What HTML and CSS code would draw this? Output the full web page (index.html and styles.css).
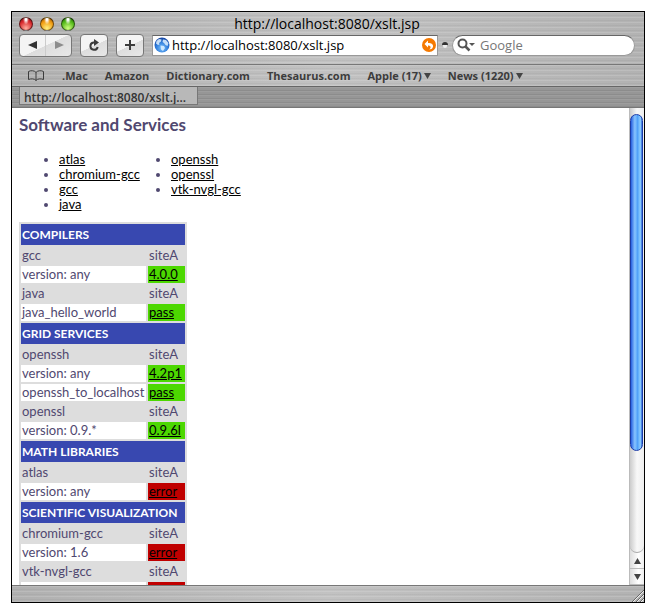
FILE: index.html
```html
<!DOCTYPE html>
<html lang="en">
<head>
<meta charset="utf-8">
<title>http://localhost:8080/xslt.jsp</title>
<link rel="stylesheet" href="styles.css">
</head>
<body>
<div class="window">
  <header class="chrome">
    <div class="titlebar">
      <div class="lights">
        <button class="light red" aria-label="Close"></button>
        <button class="light amber" aria-label="Minimise"></button>
        <button class="light green" aria-label="Zoom"></button>
      </div>
      <div class="title">http://localhost:8080/xslt.jsp</div>
    </div>
    <div class="toolbar">
      <div class="pair">
        <button class="half" aria-label="Back"><svg width="10" height="10" viewBox="0 0 10 10"><path d="M0 5 9 1v8z" fill="#333"/></svg></button>
        <button class="half" aria-label="Forward"><svg width="10" height="10" viewBox="0 0 10 10"><path d="M10 5 1 1v8z" fill="#8c8c8c"/></svg></button>
      </div>
      <button class="tool" aria-label="Reload"><svg width="12" height="13" viewBox="0 0 12 13"><path d="M7 3.500H5.500A3.700 3.700 0 1 0 9.700 8" fill="none" stroke="#3c3c3c" stroke-width="2"/><path d="M6 0 11 3.500 6 7z" fill="#3c3c3c"/></svg></button>
      <button class="tool" aria-label="Add bookmark"><svg width="12" height="12" viewBox="0 0 12 12"><path d="M6 1v10M1 6h10" stroke="#3c3c3c" stroke-width="2"/></svg></button>
      <div class="address">
        <svg width="16" height="16" viewBox="0 0 16 16"><defs><radialGradient id="sea" cx=".5" cy=".7" r=".7"><stop offset="0" stop-color="#7cc4ff"/><stop offset=".6" stop-color="#2c78d8"/><stop offset="1" stop-color="#123f9c"/></radialGradient></defs><circle cx="8" cy="8" r="7.500" fill="url(#sea)"/><path d="M2.500 4 5 2l2.500.500L7 4.500 5 6l.500 1.500L4 8 2 6.500zM9 2.500l3 .500 2.500 3-1 3-2-1L10 6 8.500 5zM6.500 8.500 10 9l1 2-2 3-2-1.500z" fill="#e2f2ff" opacity=".85"/></svg>
        <input class="url" type="text" value="http://localhost:8080/xslt.jsp" aria-label="Address">
        <button class="snap" aria-label="SnapBack"><svg width="14" height="14" viewBox="0 0 14 14"><circle cx="7" cy="7" r="7" fill="#f57900"/><path d="M2.500 6 6 2.500V5c3.500 0 5.500 1.500 5 3.800S8.500 11.500 7 11.500C9.500 10 9 7.500 6 7.500V9.500z" fill="#fff"/></svg></button>
      </div>
      <svg class="grip" width="6" height="6" viewBox="0 0 6 6"><path d="M0 3a3 3 0 0 1 6 0z" fill="#333"/><path d="M1 3h4v1a2 2 0 0 1-4 0z" fill="#eee"/></svg>
      <label class="search">
        <svg width="18" height="14" viewBox="0 0 18 14"><circle cx="5.500" cy="5.500" r="4" fill="none" stroke="#555" stroke-width="2"/><path d="m8.500 8.500 4 4" stroke="#555" stroke-width="2.500"/><path d="M12 5h6l-3 3z" fill="#555"/></svg>
        <input type="text" placeholder="Google" aria-label="Search Google">
      </label>
    </div>
  </header>
  <nav class="bookmarks">
    <button class="book" aria-label="Show all bookmarks"><svg width="18" height="12" viewBox="0 0 18 12"><path d="M9 2.500C7.500 .300 3.500 .300 1.500 1.500v8C4 8.500 7.500 8.500 9 10.500c1.500-2 5-2 7.500-1V1.500C14.500 .300 10.500 .300 9 2.500zv8" fill="none" stroke="#3c3c3c"/></svg></button>
    <a href="#">.Mac</a>
    <a href="#">Amazon</a>
    <a href="#">Dictionary.com</a>
    <a href="#">Thesaurus.com</a>
    <button class="folder">Apple (17)<svg width="7" height="6" viewBox="0 0 7 6"><path d="M0 0h7L3.500 6z" fill="#444"/></svg></button>
    <button class="folder">News (1220)<svg width="7" height="6" viewBox="0 0 7 6"><path d="M0 0h7L3.500 6z" fill="#444"/></svg></button>
  </nav>
  <div class="tabs"><a class="tab" href="#">http://localhost:8080/xslt.j...</a></div>
  <div class="viewport">
    <main>
      <h1>Software and Services</h1>
      <div class="index">
        <ul>
          <li><a href="#atlas">atlas</a></li>
          <li><a href="#chromium-gcc">chromium-gcc</a></li>
          <li><a href="#gcc">gcc</a></li>
          <li><a href="#java">java</a></li>
        </ul>
        <ul>
          <li><a href="#openssh">openssh</a></li>
          <li><a href="#openssl">openssl</a></li>
          <li><a href="#vtk-nvgl-gcc">vtk-nvgl-gcc</a></li>
        </ul>
      </div>
      <table>
        <tr><th colspan="2">COMPILERS</th></tr>
        <tr class="pkg" id="gcc"><td>gcc</td><td>siteA</td></tr>
        <tr><td>version: any</td><td class="pass"><a href="#">4.0.0</a></td></tr>
        <tr class="pkg" id="java"><td>java</td><td>siteA</td></tr>
        <tr><td>java_hello_world</td><td class="pass"><a href="#">pass</a></td></tr>
        <tr><th colspan="2">GRID SERVICES</th></tr>
        <tr class="pkg" id="openssh"><td>openssh</td><td>siteA</td></tr>
        <tr><td>version: any</td><td class="pass"><a href="#">4.2p1</a></td></tr>
        <tr><td>openssh_to_localhost</td><td class="pass"><a href="#">pass</a></td></tr>
        <tr class="pkg" id="openssl"><td>openssl</td><td>siteA</td></tr>
        <tr><td>version: 0.9.*</td><td class="pass"><a href="#">0.9.6l</a></td></tr>
        <tr><th colspan="2">MATH LIBRARIES</th></tr>
        <tr class="pkg" id="atlas"><td>atlas</td><td>siteA</td></tr>
        <tr><td>version: any</td><td class="error"><a href="#">error</a></td></tr>
        <tr><th colspan="2">SCIENTIFIC VISUALIZATION</th></tr>
        <tr class="pkg" id="chromium-gcc"><td>chromium-gcc</td><td>siteA</td></tr>
        <tr><td>version: 1.6</td><td class="error"><a href="#">error</a></td></tr>
        <tr class="pkg" id="vtk-nvgl-gcc"><td>vtk-nvgl-gcc</td><td>siteA</td></tr>
        <tr><td>version: 1.1.3</td><td class="error"><a href="#">error</a></td></tr>
      </table>
    </main>
    <div class="scrollbar">
      <div class="track"><div class="thumb"></div></div>
      <button class="arrow" aria-label="Scroll up"><svg width="7" height="6" viewBox="0 0 7 6"><path d="M0 6h7L3.500 0z" fill="#444"/></svg></button>
      <button class="arrow" aria-label="Scroll down"><svg width="7" height="6" viewBox="0 0 7 6"><path d="M0 0h7L3.500 6z" fill="#444"/></svg></button>
    </div>
  </div>
  <footer class="status"><svg width="13" height="13" viewBox="0 0 13 13"><path d="M1 13 13 1M5 13l8-8M9 13l4-4" stroke="#666"/><path d="M2 13 13 2M6 13l7-7M10 13l3-3" stroke="#eee"/></svg></footer>
</div>
</body>
</html>
```
FILE: styles.css
```css
* { box-sizing: border-box; }

body {
  margin: 0;
  padding: 11px 10px 10px 11px;
  height: 100vh;
  background: #fff;
  font-family: "Open Sans", sans-serif;
  font-size: 13px;
}

button {
  padding: 0;
  border: 0;
  background: none;
  font: inherit;
  color: inherit;
}

svg { display: block; flex: none; }

.window {
  height: 100%;
  display: flex;
  flex-direction: column;
  border: 1px solid #000;
  overflow: hidden;
}

.chrome, .bookmarks, .status {
  background: repeating-linear-gradient(#fff2 0 1px, #0000 1px 3px, #00000009 3px 4px, #0000 4px 5px), linear-gradient(90deg, #b0b0b0, #c2c2c2 50%, #b2b2b2);
}

.chrome { padding: 2px 9px 7px 7px; border-bottom: 1px solid #777; }

.titlebar {
  display: grid;
  grid-template-columns: 56px 1fr 56px;
  align-items: center;
  height: 19px;
}

.lights { display: flex; gap: 7px; }

.light {
  width: 14px;
  height: 14px;
  border: 1px solid #0008;
  border-radius: 50%;
}
.red { background: radial-gradient(ellipse at 50% 10%, #fff 8%, #fff0 35%), radial-gradient(circle at 50% 85%, #ffb0a0, #d8282c 60%, #7c1012); }
.amber { background: radial-gradient(ellipse at 50% 10%, #fff 8%, #fff0 35%), radial-gradient(circle at 50% 85%, #fff080, #f09a10 60%, #8a4a00); }
.green { background: radial-gradient(ellipse at 50% 10%, #fff 8%, #fff0 35%), radial-gradient(circle at 50% 85%, #d0ff80, #52b818 60%, #1c5c04); }

.title { text-align: center; font-size: 14px; line-height: 16px; color: #000; }

.toolbar {
  display: flex;
  align-items: center;
  height: 24px;
}

.pair, .tool {
  height: 23px;
  border: 1px solid #777;
  border-radius: 4px;
  background: linear-gradient(155deg, #f4f4f4 50%, #ddd 51%, #e8e8e8);
}
.pair { display: flex; width: 53px; margin-right: 8px; }
.half { flex: 1; display: grid; place-items: center; }
.half + .half { border-left: 1px solid #ccc; }
.tool { display: grid; place-items: center; width: 28px; margin-right: 8px; }

.address {
  flex: 1;
  display: flex;
  align-items: center;
  gap: 2px;
  height: 21px;
  padding: 0 1px;
  border: 1px solid #999;
  border-top-color: #666;
  background: #fff;
}

input {
  flex: 1;
  min-width: 0;
  padding: 0;
  border: 0;
  outline: 0;
  background: none;
  font: inherit;
  color: #000;
}
input::placeholder { color: #777; opacity: 1; }

.grip { margin: 0 4px; }

.search {
  display: flex;
  align-items: center;
  gap: 5px;
  width: 183px;
  height: 21px;
  padding: 0 8px 0 4px;
  border: 1px solid #999;
  border-top-color: #666;
  border-radius: 11px;
  background: #fff;
}

.bookmarks {
  display: flex;
  align-items: center;
  gap: 17px;
  height: 22px;
  padding: 0 15px;
  border-bottom: 1px solid #666;
  font-size: 11px;
  font-weight: 700;
  color: #3c3c3c;
}
.bookmarks a { color: inherit; text-decoration: none; }
.folder { display: flex; align-items: center; gap: 2px; }

.tabs {
  display: flex;
  height: 21px;
  padding: 0 7px 2px;
  border-bottom: 1px solid #777;
  background: repeating-linear-gradient(#fff1 0 1px, #0000 1px 3px, #0001 3px 4px), #969696;
}
.tab {
  width: 179px;
  padding: 0 4px;
  overflow: hidden;
  border: 1px solid #777;
  border-top: 0;
  background: #b8b8b8;
  color: #333;
  font-size: 12px;
  font-weight: 600;
  line-height: 21px;
  white-space: nowrap;
  text-decoration: none;
}

.viewport { flex: 1; min-height: 0; display: flex; background: #fff; }

main {
  flex: 1;
  padding: 7px;
  overflow: hidden;
  color: #504870;
  font-family: Lato, sans-serif;
}

h1 { margin: 0; font-size: 17px; line-height: 20px; font-weight: 700; }

.index { display: flex; gap: 15px; margin: 17px 0 10px 25px; }
.index ul { margin: 0; padding-left: 15px; min-width: 97px; line-height: 15px; }
main a { color: #000; }

table { border-spacing: 2px; background: #ddd; line-height: 15px; }
th, td { padding: 1px; text-align: left; white-space: nowrap; }
th { height: 21px; background: #3848b0; color: #fff; font-size: 12px; font-weight: 700; }
td { background: #fff; }
.pkg td { background: none; }
td:first-child { min-width: 125px; }
td:last-child { min-width: 37px; }
td.pass { background: #4cd800; }
td.error { background: #c00000; }

.scrollbar {
  width: 15px;
  display: flex;
  flex-direction: column;
  border-left: 1px solid #bbb;
  background: linear-gradient(90deg, #ddd, #fff 60%, #eee);
}
.track { flex: 1; padding-top: 6px; border-bottom: 1px solid #aaa; border-radius: 0 0 8px 8px; background: linear-gradient(90deg, #ccc, #f8f8f8 50%, #eee); }
.thumb {
  height: 77%;
  margin-right: 1px;
  border: 1px solid #1c3ca8;
  border-radius: 7px;
  background: linear-gradient(90deg, #2860e0, #88c4ff 35%, #50a0f8 60%, #90d0ff 85%, #3068d8);
}
.arrow { display: grid; place-items: center; height: 16px; border-bottom: 1px solid #bbb; }

.status { display: flex; justify-content: flex-end; align-items: flex-end; height: 17px; border-top: 1px solid #777; }
```
